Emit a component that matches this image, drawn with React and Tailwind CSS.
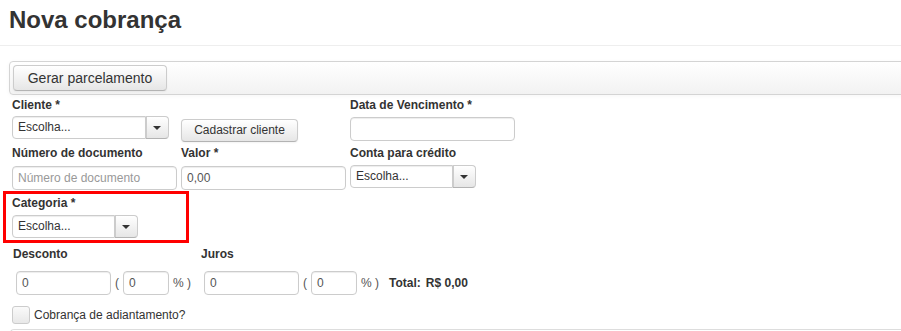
import React from "react";

function Caret() {
  return (
    <div className="w-0 h-0 border-l-[4px] border-r-[4px] border-t-[4px] border-l-transparent border-r-transparent border-t-[#333]" />
  );
}

function Select({ className }) {
  return (
    <div className={"flex h-[23px] " + className}>
      <div className="flex-1 border border-[#ccc] rounded-l-[4px] bg-white pl-[5px] text-[12px] leading-[21px] text-[#333] shadow-[inset_0_1px_1px_rgba(0,0,0,0.075)]">
        Escolha...
      </div>
      <div className="w-[23px] flex items-center justify-center border border-l-0 border-[#ccc] border-b-[#b3b3b3] rounded-r-[4px] bg-linear-to-b from-white to-[#e6e6e6] shadow-[inset_1px_0_0_#ccc]">
        <Caret />
      </div>
    </div>
  );
}

function Label({ children, className = "" }) {
  return (
    <div className={"h-[19px] text-[12px] font-bold leading-[17px] text-[#333] whitespace-nowrap " + className}>
      {children}
    </div>
  );
}

function Input({ className = "", value, placeholder }) {
  return (
    <div
      className={
        "h-[24px] border border-[#ccc] rounded-[4px] bg-white pl-[5px] text-[12px] leading-[22px] shadow-[inset_0_1px_1px_rgba(0,0,0,0.075)] whitespace-nowrap overflow-hidden " +
        className
      }
    >
      {value !== undefined ? (
        <span className="text-[#555]">{value}</span>
      ) : (
        <span className="text-[#999]">{placeholder}</span>
      )}
    </div>
  );
}

export default function App() {
  return (
    <div className="w-[901px] h-[331px] overflow-hidden bg-white font-['Liberation_Sans',Arial,sans-serif] text-[#333]">
      <div className="h-[46px] border-b border-[#eee] pl-[9px] pt-[5px]">
        <h1 className="text-[24px] font-bold leading-[30px] text-[#333]">Nova cobrança</h1>
      </div>

      <div className="mt-[15px] ml-[9px] w-[920px] h-[34px] border border-[#d4d4d4] rounded-[4px] bg-linear-to-b from-white to-[#f2f2f2] p-[3px] shadow-[0_1px_4px_rgba(0,0,0,0.04)]">
        <button className="h-[26px] w-[154px] border border-[#ccc] border-b-[#b3b3b3] rounded-[4px] bg-linear-to-b from-white to-[#e6e6e6] text-[14px] leading-[24px] text-[#333] shadow-[inset_0_1px_0_rgba(255,255,255,0.2),0_1px_2px_rgba(0,0,0,0.05)]">
          Gerar parcelamento
        </button>
      </div>

      {/* Row 1 */}
      <div className="flex ml-[12px] mt-[2px]">
        <div className="w-[169px]">
          <Label>Cliente *</Label>
          <Select className="w-[157px]" />
        </div>
        <div className="w-[169px] pt-[20px]">
          <button className="h-[23px] w-[117px] border border-[#ccc] border-b-[#b3b3b3] rounded-[4px] bg-linear-to-b from-white to-[#e6e6e6] text-[12px] leading-[21px] text-[#333] shadow-[0_1px_2px_rgba(0,0,0,0.05)]">
            Cadastrar cliente
          </button>
        </div>
        <div>
          <Label>Data de Vencimento *</Label>
          <Input className="w-[165px] mt-[1px]" value="" />
        </div>
      </div>

      {/* Row 2 */}
      <div className="flex ml-[12px] mt-[3px]">
        <div className="w-[169px]">
          <Label className="!h-[20px]">Número de documento</Label>
          <Input className="w-[165px] mt-[1px]" placeholder="Número de documento" />
        </div>
        <div className="w-[169px]">
          <Label className="!h-[20px]">Valor *</Label>
          <Input className="w-[165px] mt-[1px]" value="0,00" />
        </div>
        <div>
          <Label className="!h-[20px]">Conta para crédito</Label>
          <Select className="w-[126px]" />
        </div>
      </div>

      {/* Categoria (highlighted) */}
      <div className="mt-[1px] ml-[3px] w-[186px] border-[3px] border-[#ff0000] pl-[6px] pt-[1px] pb-[2px]">
        <Label>Categoria *</Label>
        <Select className="w-[126px] mt-[1px]" />
      </div>

      {/* Desconto / Juros labels */}
      <div className="flex ml-[13px] mt-[3px]">
        <Label className="w-[188px]">Desconto</Label>
        <Label>Juros</Label>
      </div>

      {/* Desconto / Juros inputs */}
      <div className="flex items-center ml-[16px] mt-[6px] text-[12px]">
        <Input className="w-[95px]" value="0" />
        <span className="ml-[4px] text-[#555]">(</span>
        <Input className="w-[46px] ml-[4px]" value="0" />
        <span className="ml-[4px] text-[#555] whitespace-pre">% )</span>
        <Input className="w-[95px] ml-[13px]" value="0" />
        <span className="ml-[4px] text-[#555]">(</span>
        <Input className="w-[46px] ml-[4px]" value="0" />
        <span className="ml-[4px] text-[#555] whitespace-pre">% )</span>
        <span className="ml-[10px] font-bold text-[#333]">Total:</span>
        <span className="ml-[5px] font-bold text-[#333]">R$ 0,00</span>
      </div>

      {/* Checkbox */}
      <div className="flex items-center ml-[12px] mt-[11px] h-[18px]">
        <div className="w-[18px] h-[18px] border border-[#ccc] rounded-[3px] bg-linear-to-b from-[#fafafa] to-[#e8e8e8]" />
        <span className="ml-[4px] text-[12px] text-[#333]">Cobrança de adiantamento?</span>
      </div>

      <div className="mt-[5px] ml-[10px] h-[10px] border-t border-l border-[#ddd] rounded-tl-[4px]" />
    </div>
  );
}
